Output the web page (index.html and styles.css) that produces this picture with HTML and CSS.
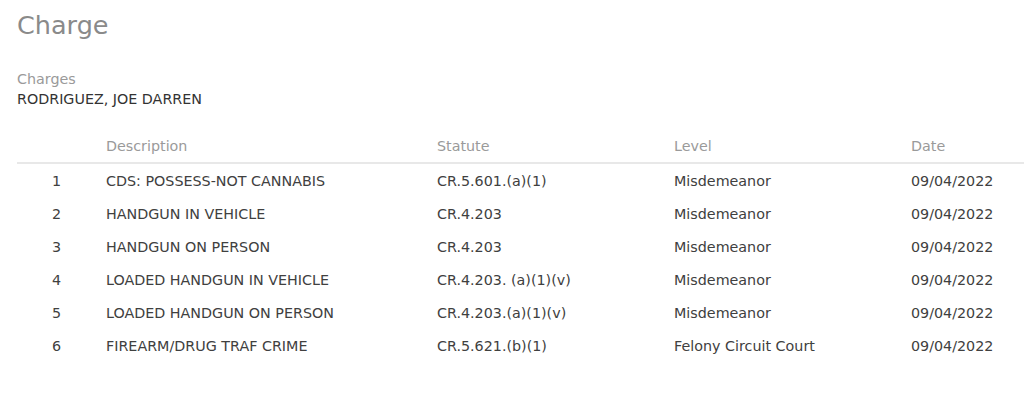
FILE: index.html
```html
<!DOCTYPE html>
<html>
<head>
<meta charset="utf-8">
<link rel="stylesheet" href="styles.css">
</head>
<body>
<div class="page">
  <h1 class="title">Charge</h1>
  <div class="party">
    <div class="label">Charges</div>
    <div class="name">RODRIGUEZ, JOE DARREN</div>
  </div>
  <div class="table">
    <div class="row head">
      <div class="c num"></div>
      <div class="c">Description</div>
      <div class="c">Statute</div>
      <div class="c">Level</div>
      <div class="c">Date</div>
    </div>
    <div class="row">
      <div class="c num">1</div>
      <div class="c">CDS: POSSESS-NOT CANNABIS</div>
      <div class="c">CR.5.601.(a)(1)</div>
      <div class="c">Misdemeanor</div>
      <div class="c">09/04/2022</div>
    </div>
    <div class="row">
      <div class="c num">2</div>
      <div class="c">HANDGUN IN VEHICLE</div>
      <div class="c">CR.4.203</div>
      <div class="c">Misdemeanor</div>
      <div class="c">09/04/2022</div>
    </div>
    <div class="row">
      <div class="c num">3</div>
      <div class="c">HANDGUN ON PERSON</div>
      <div class="c">CR.4.203</div>
      <div class="c">Misdemeanor</div>
      <div class="c">09/04/2022</div>
    </div>
    <div class="row">
      <div class="c num">4</div>
      <div class="c">LOADED HANDGUN IN VEHICLE</div>
      <div class="c">CR.4.203. (a)(1)(v)</div>
      <div class="c">Misdemeanor</div>
      <div class="c">09/04/2022</div>
    </div>
    <div class="row">
      <div class="c num">5</div>
      <div class="c">LOADED HANDGUN ON PERSON</div>
      <div class="c">CR.4.203.(a)(1)(v)</div>
      <div class="c">Misdemeanor</div>
      <div class="c">09/04/2022</div>
    </div>
    <div class="row">
      <div class="c num">6</div>
      <div class="c">FIREARM/DRUG TRAF CRIME</div>
      <div class="c">CR.5.621.(b)(1)</div>
      <div class="c">Felony Circuit Court</div>
      <div class="c">09/04/2022</div>
    </div>
  </div>
</div>
</body>
</html>
```
FILE: styles.css
```css
html, body {
  margin: 0;
  padding: 0;
  background: #ffffff;
}
body {
  font-family: "DejaVu Sans", Verdana, sans-serif;
  font-size: 14.3px;
  color: #404040;
}
.page {
  padding: 10px 0 0 17px;
}
.title {
  margin: 0;
  font-size: 25.5px;
  font-weight: normal;
  color: #8a8a8a;
  line-height: 30px;
}
.party {
  margin-top: 30px;
}
.label {
  color: #9a9a9a;
  line-height: 18px;
}
.name {
  color: #333333;
  line-height: 18px;
  margin-top: 2px;
}
.table {
  margin-top: 25px;
}
.row {
  display: grid;
  grid-template-columns: 89px 331px 237px 237px 1fr;
  height: 33px;
  align-items: center;
  line-height: 18px;
}
.row.head {
  height: 31px;
  box-sizing: border-box;
  border-bottom: 2px solid #e8e8e8;
  color: #9a9a9a;
  align-items: end;
  padding-bottom: 7px;
}
.c.num {
  text-align: center;
  padding-right: 10px;
}
```
